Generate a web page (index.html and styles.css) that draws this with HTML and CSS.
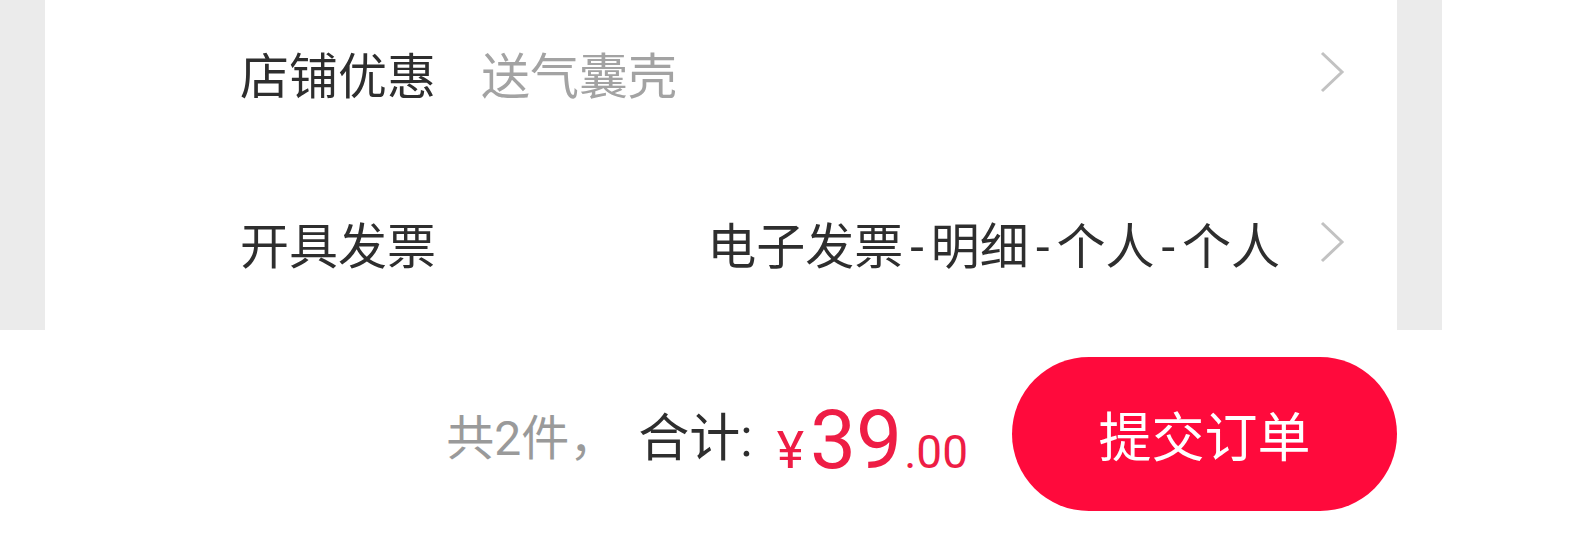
FILE: index.html
```html
<!DOCTYPE html>
<html lang="zh-CN">
<head>
  <meta charset="UTF-8">
  <meta name="viewport" content="width=device-width, initial-scale=1.0">
  <title>确认订单</title>
  <link rel="stylesheet" href="styles.css">
</head>
<body>
  <div class="top">
    <div class="card">
      <div class="row">
        <span class="label">店铺优惠</span>
        <span class="hint">送气囊壳</span>
        <svg class="arrow" viewBox="0 0 28 44"><polyline points="4,3 24,22 4,41"/></svg>
      </div>
      <div class="row">
        <span class="label">开具发票</span>
        <span class="value">电子发票<span class="sep">-</span>明细<span class="sep">-</span>个人<span class="sep">-</span>个人</span>
        <svg class="arrow" viewBox="0 0 28 44"><polyline points="4,3 24,22 4,41"/></svg>
      </div>
    </div>
  </div>

  <div class="bar">
    <span class="count">共2件，</span>
    <span class="total">合计:</span>
    <span class="price"><span class="yen">¥</span><span class="int">39</span><span class="dec">.00</span></span>
    <button class="submit">提交订单</button>
  </div>
</body>
</html>
```

FILE: styles.css
```css
body { margin: 0; background: #fff; font-family: Roboto, "Noto Sans CJK SC", sans-serif; }
.top { width: 1442px; height: 330px; box-sizing: border-box; padding: 0 45px; background: #ebebeb; overflow: hidden; }
.card { background: #fff; margin-top: -13px; height: 343px; }
.row { height: 170px; display: flex; align-items: center; padding: 0 51px 0 195px; font-size: 49px; color: #2e2e2e; }
.hint { color: #a3a3a3; margin-left: 45px; }
.value { margin-left: auto; margin-right: 38px; }
.sep { margin: 0 7px; }
.arrow { width: 28px; height: 44px; margin-left: auto; }
.value + .arrow { margin-left: 0; }
.arrow polyline { fill: none; stroke: #c2c2c2; stroke-width: 3; }
.bar { height: 208px; display: flex; align-items: center; justify-content: flex-end; padding-right: 184px; }
.count { font-size: 48px; color: #9a9a9a; margin-right: 21px; }
.total { font-size: 51px; color: #2e2e2e; margin-right: 24px; }
.price { color: #ee1d45; display: flex; align-items: baseline; padding-top: 12px; }
.yen { font-size: 52px; margin-right: 6px; }
.int { font-size: 82px; }
.dec { font-size: 46px; margin-left: 2px; }
.submit { width: 385px; height: 154px; margin-left: 44px; border: none; border-radius: 77px; background: #ff0a3c; color: #fff; font-family: "Noto Sans CJK SC", sans-serif; font-size: 53px; }
```
